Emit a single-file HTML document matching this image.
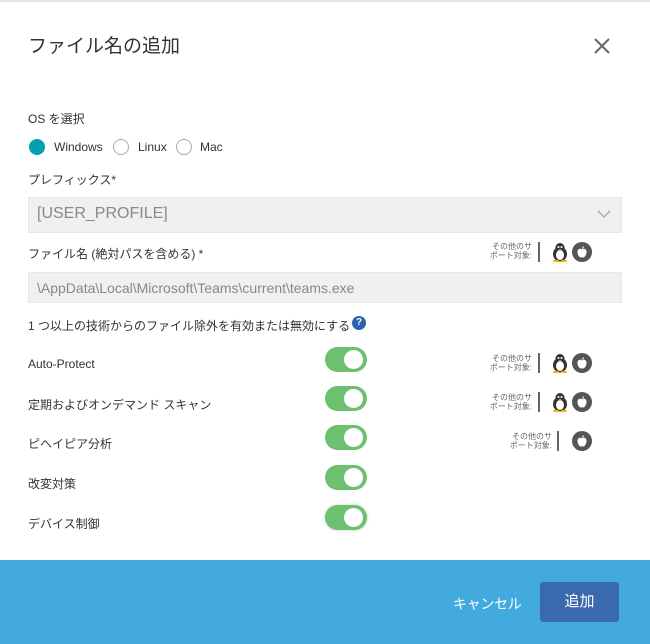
<!DOCTYPE html>
<html><head><meta charset="utf-8"><style>
*{margin:0;padding:0;box-sizing:border-box}
body{width:650px;height:644px;background:#fff;font-family:"Liberation Sans","Noto Sans CJK JP",sans-serif;color:#333;position:relative;overflow:hidden}
.a{position:absolute;white-space:nowrap}
.t{font-size:12px;color:#333}
.tg{position:absolute;left:325px;width:42px;height:25px;border-radius:13px;background:#6cc070}
.tg:after{content:"";position:absolute;right:4px;top:3px;width:19px;height:19px;border-radius:50%;background:#fff}
.sup{position:absolute;font-size:8px;line-height:9px;color:#666;text-align:right}
.bar{position:absolute;width:2px;height:20px;background:#666}
.ic{position:absolute;width:20px;height:20px}
.rad{position:absolute;width:16px;height:16px;border-radius:50%;border:1px solid #aaa;top:139px}
</style></head><body>
<svg width="0" height="0" style="position:absolute">
<defs>
<symbol id="peng" viewBox="0 0 20 20"><ellipse cx="10" cy="12" rx="7" ry="7.5" fill="#333"/><circle cx="10" cy="5.5" r="4.5" fill="#333"/><ellipse cx="10" cy="13" rx="4" ry="5" fill="#fff"/><circle cx="8.5" cy="5" r="1" fill="#fff"/><circle cx="11.5" cy="5" r="1" fill="#fff"/><path d="M8.5 7.2L11.5 7.2L10 9Z" fill="#f0b400"/><ellipse cx="6" cy="19" rx="3" ry="1.2" fill="#f0b400"/><ellipse cx="14" cy="19" rx="3" ry="1.2" fill="#f0b400"/></symbol>
<symbol id="apl" viewBox="0 0 20 20"><circle cx="10" cy="10" r="10" fill="#555"/><path d="M10 7.5C8 6 5.5 7 5.5 10C5.5 13 7.5 15.5 8.8 15.5C9.5 15.5 9.8 15.1 10 15.1C10.2 15.1 10.5 15.5 11.2 15.5C12.5 15.5 14.5 13 14.5 10C14.5 7 12 6 10 7.5Z" fill="#fff"/><path d="M10 7C10 5.5 11 4.5 12 4.3C12 5.6 11 6.7 10 7Z" fill="#fff"/></symbol>
</defs></svg>
<div class="a" style="left:0;top:0;width:650px;height:2px;background:#e4e4e4"></div>
<div class="a" style="left:28px;top:31px;font-size:19px;color:#333">ファイル名の追加</div>
<svg class="a" style="left:593px;top:37px" width="18" height="18"><path d="M2 2L16 16M16 2L2 16" stroke="#666" stroke-width="2"/></svg>
<div class="a t" style="left:28px;top:110px">OS を選択</div>
<div class="rad" style="left:29px;background:#00a0b0;border-color:#00a0b0"></div>
<div class="a t" style="left:54px;top:140px">Windows</div>
<div class="rad" style="left:113px"></div>
<div class="a t" style="left:138px;top:140px">Linux</div>
<div class="rad" style="left:176px"></div>
<div class="a t" style="left:200px;top:140px">Mac</div>
<div class="a t" style="left:28px;top:171px">プレフィックス*</div>
<div class="a" style="left:28px;top:197px;width:594px;height:36px;background:#f0f0f0;border:1px solid #e6e6e6"></div>
<div class="a" style="left:37px;top:205px;font-size:16px;color:#888">[USER_PROFILE]</div>
<svg class="a" style="left:597px;top:209px" width="14" height="10"><path d="M1 2L7 8L13 2" stroke="#aaa" stroke-width="1.5" fill="none"/></svg>
<div class="a t" style="left:28px;top:245px">ファイル名 (絶対パスを含める) *</div>
<div class="a" style="left:28px;top:272px;width:594px;height:31px;background:#f0f0f0;border:1px solid #e6e6e6"></div>
<div class="a" style="left:37px;top:280px;font-size:14px;color:#888">\AppData\Local\Microsoft\Teams\current\teams.exe</div>
<div class="a t" style="left:28px;top:317px">1 つ以上の技術からのファイル除外を有効または無効にする</div>
<div class="a" style="left:352px;top:316px;width:14px;height:14px;border-radius:50%;background:#2e62b0;color:#fff;font-size:10px;font-weight:bold;text-align:center;line-height:14px">?</div>

<div class="a t" style="left:28px;top:357px">Auto-Protect</div>
<div class="a t" style="left:28px;top:396px">定期およびオンデマンド スキャン</div>
<div class="a t" style="left:28px;top:435px">ピヘイピア分析</div>
<div class="a t" style="left:28px;top:475px">改変対策</div>
<div class="a t" style="left:28px;top:515px">デバイス制御</div>
<div class="tg" style="top:347px"></div>
<div class="tg" style="top:386px"></div>
<div class="tg" style="top:425px"></div>
<div class="tg" style="top:465px"></div>
<div class="tg" style="top:505px;box-shadow:0 0 3px #ccc"></div>

<div class="sup" style="left:470px;top:242px;width:62px">その他のサ<br>ポート対象:</div>
<div class="bar" style="left:538px;top:242px"></div>
<svg class="ic" style="left:550px;top:242px"><use href="#peng"/></svg>
<svg class="ic" style="left:572px;top:242px"><use href="#apl"/></svg>
<div class="sup" style="left:470px;top:354px;width:62px">その他のサ<br>ポート対象:</div>
<div class="bar" style="left:538px;top:353px"></div>
<svg class="ic" style="left:550px;top:353px"><use href="#peng"/></svg>
<svg class="ic" style="left:572px;top:353px"><use href="#apl"/></svg>
<div class="sup" style="left:470px;top:393px;width:62px">その他のサ<br>ポート対象:</div>
<div class="bar" style="left:538px;top:392px"></div>
<svg class="ic" style="left:550px;top:392px"><use href="#peng"/></svg>
<svg class="ic" style="left:572px;top:392px"><use href="#apl"/></svg>
<div class="sup" style="left:490px;top:432px;width:62px">その他のサ<br>ポート対象:</div>
<div class="bar" style="left:557px;top:431px"></div>
<svg class="ic" style="left:572px;top:431px"><use href="#apl"/></svg>

<div class="a" style="left:0;top:560px;width:650px;height:84px;background:#42aadc"></div>
<div class="a" style="left:453px;top:594px;font-size:14px;color:#fff;letter-spacing:-0.3px">キャンセル</div>
<div class="a" style="left:540px;top:582px;width:79px;height:40px;background:#3a69b0;border-radius:3px;color:#fff;font-size:15px;text-align:center;line-height:40px">追加</div>
</body></html>
